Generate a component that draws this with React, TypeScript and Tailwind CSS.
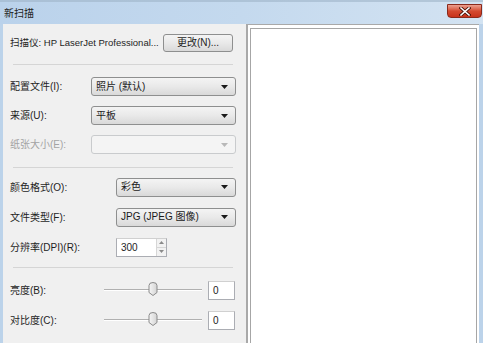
import React from 'react';

const font = { fontFamily: '"Liberation Sans", "Noto Sans CJK SC", sans-serif' };

const Arrow: React.FC<{ disabled?: boolean }> = ({ disabled }) => (
  <svg width="7" height="4" viewBox="0 0 7 4" className="shrink-0">
    <path d="M0 0 H7 L3.5 4 Z" fill={disabled ? '#b8b8b8' : '#1a1a1a'} />
  </svg>
);

const Select: React.FC<{ value?: string; width: string; disabled?: boolean }> = ({ value, width, disabled }) => (
  <div
    className={`${width} h-[19px] flex items-center justify-between pl-[4px] pr-[7px] rounded-[3px] border ${
      disabled
        ? 'border-[#c9cbcd] bg-[#f4f4f4]'
        : 'border-[#8e8f8f] bg-gradient-to-b from-[#f4f4f4] via-[#e9e9e9] to-[#d9d9d9]'
    }`}
  >
    <span className="text-[10px] leading-none text-[#1a1a1a] whitespace-nowrap">{value}</span>
    <Arrow disabled={disabled} />
  </div>
);

const Separator = ({ mt }: { mt: string }) => (
  <div className={`${mt} mx-[3px] h-[2px] border-t border-[#d5d5d5] border-b-white`} />
);

const Slider = () => (
  <div className="relative w-[98px] h-[20px]">
    <div className="absolute left-0 right-0 top-[9px] h-[2px] border-t border-[#b0b0b0] border-b border-b-white" />
    <svg className="absolute left-[44px] top-[2px]" width="10" height="14" viewBox="0 0 10 14">
      <defs>
        <linearGradient id="thumbg" x1="0" y1="0" x2="1" y2="0">
          <stop offset="0" stopColor="#f6f6f6" />
          <stop offset="1" stopColor="#d4d4d4" />
        </linearGradient>
      </defs>
      <path d="M1 3.5 Q1 0.5 5 0.5 Q9 0.5 9 3.5 V10.5 L5 13.5 L1 10.5 Z" fill="url(#thumbg)" stroke="#8a8a8a" />
    </svg>
  </div>
);

const Field: React.FC<{ value: string; className: string }> = ({ value, className }) => (
  <div className={`${className} h-[19px] bg-white border border-[#abadb3] border-t-[#d0d0d0] flex items-center pl-[4px] text-[10px] text-[#1a1a1a]`}>
    {value}
  </div>
);

export default function App() {
  return (
    <div className="w-[483px] h-[343px] overflow-hidden flex flex-col bg-[#c4d9ee] select-none" style={font}>
      {/* title bar */}
      <div className="h-[24px] shrink-0 relative bg-gradient-to-r from-[#bad2eb] via-[#c4d9ee] to-[#d3e3f2]">
        <div className="absolute left-0 right-0 top-0 h-[2px] bg-[#9fb4c8] opacity-60" />
        <span className="absolute left-[4px] top-[8px] text-[10px] leading-[12px] text-[#1e1e1e]">新扫描</span>
        <div className="absolute left-[447px] top-[4px] w-[35px] h-[14px] rounded-b-[4px] border border-[#8a2a1c] bg-gradient-to-b from-[#eba090] via-[#d44a30] to-[#c8321a] flex items-center justify-center">
          <svg width="12" height="9" viewBox="0 0 12 9">
            <path d="M2 1 L10 8 M10 1 L2 8" stroke="#4a1208" strokeWidth="3.2" strokeLinecap="square" />
            <path d="M2 1 L10 8 M10 1 L2 8" stroke="#ffffff" strokeWidth="1.6" strokeLinecap="square" />
          </svg>
        </div>
      </div>

      {/* body */}
      <div className="flex flex-1 min-h-0">
        <div className="w-[3px] shrink-0 bg-[#bcd3ea]" />
        {/* settings panel */}
        <div className="w-[243px] shrink-0 bg-[#f0f0f0] pl-[7px] pr-[10px] text-[10px] text-[#1e1e1e] whitespace-nowrap">
          <div className="h-[30px] mt-[4px] flex items-center justify-between">
            <span className="text-[9.5px]">扫描仪: HP LaserJet Professional...</span>
            <div className="w-[70px] h-[18px] mr-[3px] rounded-[3px] border border-[#8e8f8f] bg-gradient-to-b from-[#f4f4f4] via-[#e9e9e9] to-[#d9d9d9] flex items-center justify-center leading-none">
              更改(N)...
            </div>
          </div>
          <Separator mt="mt-[6px]" />

          <div className="mt-[6px]">
            <div className="h-[29px] flex items-center">
              <span className="w-[81px]">配置文件(I):</span>
              <Select value="照片 (默认)" width="w-[145px]" />
            </div>
            <div className="h-[29px] flex items-center">
              <span className="w-[81px]">来源(U):</span>
              <Select value="平板" width="w-[145px]" />
            </div>
            <div className="h-[29px] flex items-center">
              <span className="w-[81px] text-[#a3a3a3]">纸张大小(E):</span>
              <Select width="w-[145px]" disabled />
            </div>
          </div>
          <Separator mt="mt-[8px]" />

          <div className="mt-[3px]">
            <div className="h-[30px] flex items-center">
              <span className="w-[106px]">颜色格式(O):</span>
              <Select value="彩色" width="w-[120px]" />
            </div>
            <div className="h-[30px] flex items-center">
              <span className="w-[106px]">文件类型(F):</span>
              <Select value="JPG (JPEG 图像)" width="w-[120px]" />
            </div>
            <div className="h-[30px] flex items-center">
              <span className="w-[106px]">分辨率(DPI)(R):</span>
              <div className="w-[51px] h-[19px] bg-white border border-[#abadb3] border-t-[#d0d0d0] flex">
                <span className="flex-1 pl-[4px] leading-[17px]">300</span>
                <div className="w-[10px] flex flex-col border-l border-[#d6d6d6]">
                  <div className="flex-1 flex items-center justify-center bg-[#f2f2f2] border-b border-[#d6d6d6]">
                    <svg width="5" height="3" viewBox="0 0 5 3"><path d="M0 3 L2.5 0 L5 3 Z" fill="#8a8a8a" /></svg>
                  </div>
                  <div className="flex-1 flex items-center justify-center bg-[#f2f2f2]">
                    <svg width="5" height="3" viewBox="0 0 5 3"><path d="M0 0 H5 L2.5 3 Z" fill="#8a8a8a" /></svg>
                  </div>
                </div>
              </div>
            </div>
          </div>
          <Separator mt="mt-[5px]" />

          <div className="mt-[6px]">
            <div className="h-[30px] flex items-center">
              <span className="w-[94px]">亮度(B):</span>
              <Slider />
              <Field value="0" className="w-[27px] ml-[6px]" />
            </div>
            <div className="h-[30px] flex items-center">
              <span className="w-[94px]">对比度(C):</span>
              <Slider />
              <Field value="0" className="w-[27px] ml-[6px]" />
            </div>
          </div>
        </div>

        {/* preview */}
        <div className="w-[233px] shrink-0 border-l-2 border-t border-[#a9a9a9] bg-white pl-[2px] pt-[3px] pr-[2px]">
          <div className="h-full border-l border-t border-r border-[#a6a6a6] bg-white" />
        </div>
        <div className="flex-1 bg-[#bcd3ea]" />
      </div>
    </div>
  );
}
